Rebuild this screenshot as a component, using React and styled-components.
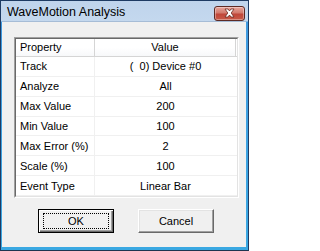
import styled, { createGlobalStyle } from "styled-components";

const GlobalStyle = createGlobalStyle`
  html, body {
    margin: 0;
    padding: 0;
    background: #ffffff;
  }
`;

const Window = styled.div`
  width: 249px;
  height: 251px;
  box-sizing: border-box;
  border: 1px solid #1e3b63;
  border-bottom-color: #1d3550;
  background: linear-gradient(to bottom, #bfd4ec 0px, #c4d8ee 20px, #3f9ae0 21px, #3aa8e2 100%);
  display: flex;
  flex-direction: column;
  font-family: "Liberation Sans", Arial, sans-serif;
`;

const TitleBar = styled.div`
  height: 20px;
  display: flex;
  align-items: center;
  justify-content: space-between;
  padding: 0 3px 0 6px;
`;

const Title = styled.span`
  font-size: 12.5px;
  color: #000000;
  padding-top: 1px;
`;

const CloseButton = styled.div`
  width: 31px;
  height: 15px;
  margin-top: 4px;
  box-sizing: border-box;
  border: 1px solid #5d2a24;
  border-radius: 3px;
  background: linear-gradient(to bottom, #e8a69c 0%, #d27a6d 45%, #c0463a 55%, #c85a48 100%);
  box-shadow: inset 0 0 0 1px rgba(255, 255, 255, 0.35);
  display: flex;
  align-items: center;
  justify-content: center;
`;

const Client = styled.div`
  flex: 1;
  margin: 0 2px 3px 1px;
  background: #f0f0f0;
  border-top: 1px solid #a6bcd6;
  display: flex;
  flex-direction: column;
  padding: 15px 0 0 12px;
`;

const ListView = styled.div`
  width: 225px;
  height: 161px;
  box-sizing: border-box;
  border-style: solid;
  border-width: 1px;
  border-color: #a0a0a0 #ffffff #ffffff #a0a0a0;
  background: #ffffff;
`;

const ListInner = styled.div`
  height: 100%;
  box-sizing: border-box;
  border-style: solid;
  border-width: 1px;
  border-color: #696969 #e3e3e3 #e3e3e3 #696969;
  display: flex;
  flex-direction: column;
  font-size: 11px;
  color: #000000;
`;

const HeaderRow = styled.div`
  display: grid;
  grid-template-columns: 79px 141px 1fr;
  height: 17px;
  border-bottom: 1px solid #d5d5d5;
`;

const HeaderCell = styled.div`
  display: flex;
  align-items: center;
  justify-content: ${(p) => (p.$center ? "center" : "flex-start")};
  padding-left: ${(p) => (p.$center ? "0" : "4px")};
  border-right: 1px solid #d5d5d5;
  background: linear-gradient(to bottom, #ffffff 0%, #ffffff 50%, #f7f8fa 100%);
`;

const Row = styled.div`
  display: grid;
  grid-template-columns: 79px 141px;
  height: 19px;
  border-bottom: 1px solid #f0f0f0;
`;

const Cell = styled.div`
  display: flex;
  align-items: center;
  justify-content: ${(p) => (p.$center ? "center" : "flex-start")};
  padding-left: ${(p) => (p.$center ? "0" : "4px")};
  border-right: ${(p) => (p.$center ? "none" : "1px solid #f0f0f0")};
  white-space: pre;
`;

const ButtonRow = styled.div`
  display: flex;
  gap: 24px;
  padding: 11px 0 0 24px;
`;

const Button = styled.button`
  width: 76px;
  height: 24px;
  box-sizing: border-box;
  font-family: "Liberation Sans", Arial, sans-serif;
  font-size: 11px;
  color: #000000;
  background: #f0f0f0;
  padding: 0;
  border-style: solid;
  border-width: 1px;
  border-color: ${(p) => (p.$default ? "#000000" : "#ffffff #696969 #696969 #ffffff")};
  box-shadow: ${(p) =>
    p.$default
      ? "inset 1px 1px 0 #ffffff, inset -1px -1px 0 #696969, inset -2px -2px 0 #a0a0a0"
      : "inset -1px -1px 0 #a0a0a0, inset 1px 1px 0 #e3e3e3"};
  display: flex;
  align-items: center;
  justify-content: center;
  outline: none;
`;

const FocusRect = styled.span`
  width: 64px;
  height: 14px;
  border: 1px dotted #000000;
  display: flex;
  align-items: center;
  justify-content: center;
`;

const rows = [
  ["Track", "(  0) Device #0"],
  ["Analyze", "All"],
  ["Max Value", "200"],
  ["Min Value", "100"],
  ["Max Error (%)", "2"],
  ["Scale (%)", "100"],
  ["Event Type", "Linear Bar"],
];

const App = () => {
  return (
    <>
      <GlobalStyle />
      <Window>
        <TitleBar>
          <Title>WaveMotion Analysis</Title>
          <CloseButton>
            <svg width="13" height="10" viewBox="0 0 13 10">
              <path
                d="M2 1 L5 1 L6.5 3 L8 1 L11 1 L8.2 5 L11 9 L8 9 L6.5 7 L5 9 L2 9 L4.8 5 Z"
                fill="#ffffff"
                stroke="#6a2a22"
                strokeWidth="0.8"
                strokeLinejoin="round"
              />
            </svg>
          </CloseButton>
        </TitleBar>
        <Client>
          <ListView>
            <ListInner>
              <HeaderRow>
                <HeaderCell>Property</HeaderCell>
                <HeaderCell $center>Value</HeaderCell>
                <div />
              </HeaderRow>
              {rows.map(([name, value]) => (
                <Row key={name}>
                  <Cell>{name}</Cell>
                  <Cell $center>{value}</Cell>
                </Row>
              ))}
            </ListInner>
          </ListView>
          <ButtonRow>
            <Button $default>
              <FocusRect>OK</FocusRect>
            </Button>
            <Button>Cancel</Button>
          </ButtonRow>
        </Client>
      </Window>
    </>
  );
};

export default App;
